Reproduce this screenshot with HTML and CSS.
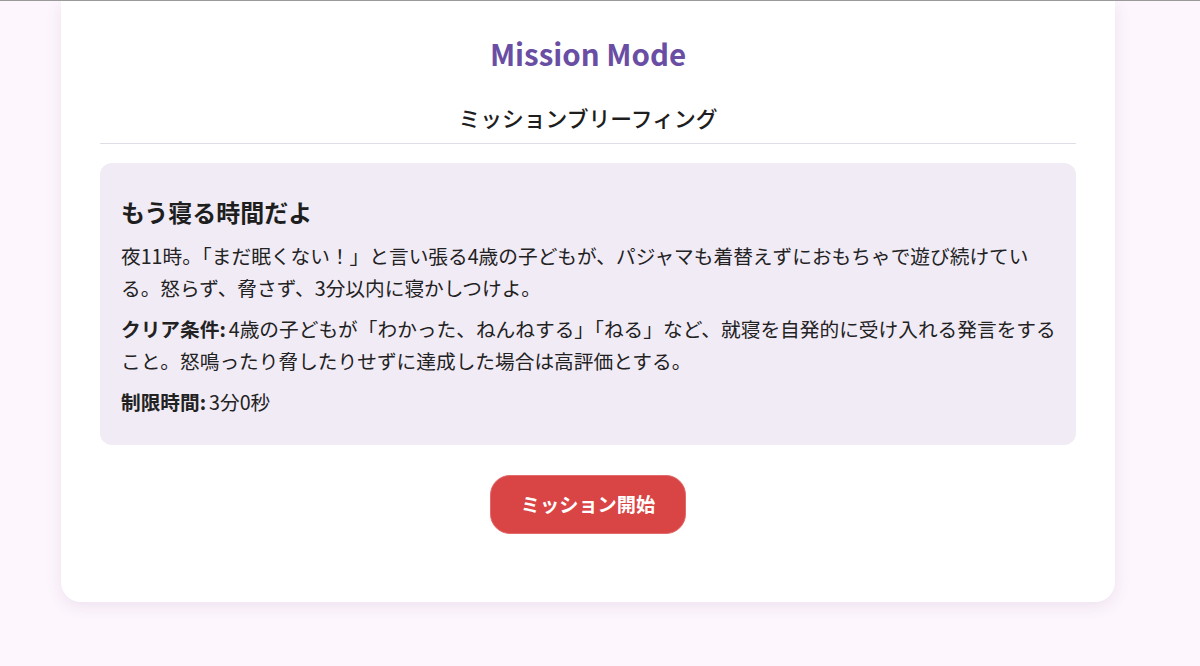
FILE: index.html
```html
<!DOCTYPE html>
<html lang="ja">
<head>
<meta charset="utf-8">
<title>Mission Mode</title>
<link rel="stylesheet" href="styles.css">
</head>
<body>
<div class="topline"></div>
<div class="page">
  <main class="card">
    <h1 class="title">Mission Mode</h1>
    <h2 class="subtitle">ミッションブリーフィング</h2>
    <section class="brief">
      <h3 class="brief-title">もう寝る時間だよ</h3>
      <p class="brief-text">夜11時。「まだ眠くない！」と言い張る4歳の子どもが、パジャマも着替えずにおもちゃで遊び続けている。怒らず、脅さず、3分以内に寝かしつけよ。</p>
      <p class="brief-text"><strong>クリア条件:</strong> 4歳の子どもが「わかった、ねんねする」「ねる」など、就寝を自発的に受け入れる発言をすること。怒鳴ったり脅したりせずに達成した場合は高評価とする。</p>
      <p class="brief-text last"><strong>制限時間:</strong> 3分0秒</p>
    </section>
    <div class="actions">
      <button class="start-btn" type="button">ミッション開始</button>
    </div>
  </main>
</div>
</body>
</html>
```

FILE: styles.css
```css
html, body {
  margin: 0;
  padding: 0;
}
body {
  background: #fdf6fd;
  font-family: "Noto Sans CJK JP", "Noto Sans", sans-serif;
  color: #222;
  height: 666px;
  overflow: hidden;
}
.topline {
  height: 1px;
  background: #9a9a9a;
  position: relative;
  z-index: 2;
}
.page {
  padding-left: 61px;
}
.card {
  width: 1054px;
  box-sizing: border-box;
  background: #fff;
  border-radius: 0 0 20px 20px;
  box-shadow: 0 4px 16px rgba(120, 80, 140, 0.12);
  padding: 32px 39px 68px;
}
.title {
  margin: 0;
  text-align: center;
  font-size: 29.5px;
  line-height: 40px;
  font-weight: 700;
  color: #6a4ea3;
}
.subtitle {
  margin: 29px 0 0;
  text-align: center;
  font-size: 21.8px;
  line-height: 32px;
  font-weight: 500;
  color: #1e1e1e;
  padding-bottom: 9px;
  border-bottom: 1.5px solid #e1dde8;
}
.brief {
  margin-top: 19px;
  background: #f1ebf6;
  border-radius: 12px;
  padding: 29px 20px 27px 21px;
}
.brief-title {
  margin: 0 0 8px;
  font-size: 24px;
  line-height: 40px;
  font-weight: 700;
  color: #1e1e1e;
}
.brief-text {
  margin: 0 0 9px;
  font-size: 19.7px;
  line-height: 32px;
  color: #222;
  word-spacing: -1.5px;
}
.brief-text strong {
  font-weight: 700;
}
.brief-text.last {
  margin-bottom: 0;
}
.actions {
  display: flex;
  justify-content: center;
  margin-top: 30px;
}
.start-btn {
  font-family: inherit;
  font-size: 19.2px;
  line-height: 32px;
  font-weight: 700;
  color: #fff;
  background: #d94444;
  border: 1px solid #e26a6a;
  border-radius: 20px;
  padding: 12px 30px 13px;
  cursor: pointer;
}
```
